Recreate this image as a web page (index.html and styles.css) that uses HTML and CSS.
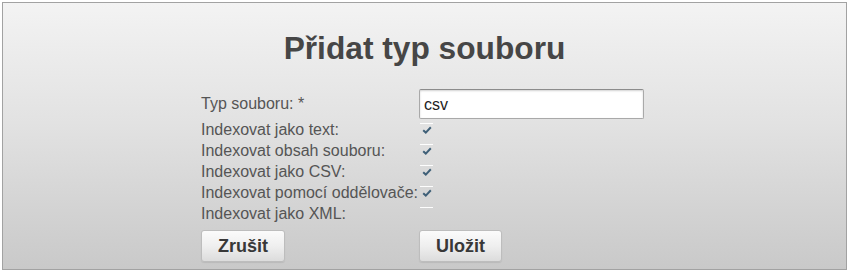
FILE: index.html
```html
<!DOCTYPE html>
<html lang="cs">
<head>
<meta charset="utf-8">
<title>Přidat typ souboru</title>
<link rel="stylesheet" href="styles.css">
</head>
<body>
<div class="panel">
  <h1 class="title">Přidat typ souboru</h1>
  <form class="form">
    <div class="row row-input">
      <label class="label">Typ souboru: *</label>
      <div class="field"><input class="text-input" type="text" value="csv"></div>
    </div>
    <div class="row">
      <label class="label">Indexovat jako text:</label>
      <div class="field"><span class="check"><svg viewBox="0 0 10 8" width="10" height="8"><path d="M1.2 4.2 L3.8 6.6 L8.8 1.2" fill="none" stroke="#3f6078" stroke-width="2"/></svg></span></div>
    </div>
    <div class="row">
      <label class="label">Indexovat obsah souboru:</label>
      <div class="field"><span class="check"><svg viewBox="0 0 10 8" width="10" height="8"><path d="M1.2 4.2 L3.8 6.6 L8.8 1.2" fill="none" stroke="#3f6078" stroke-width="2"/></svg></span></div>
    </div>
    <div class="row">
      <label class="label">Indexovat jako CSV:</label>
      <div class="field"><span class="check"><svg viewBox="0 0 10 8" width="10" height="8"><path d="M1.2 4.2 L3.8 6.6 L8.8 1.2" fill="none" stroke="#3f6078" stroke-width="2"/></svg></span></div>
    </div>
    <div class="row">
      <label class="label">Indexovat pomocí oddělovače:</label>
      <div class="field"><span class="check"><svg viewBox="0 0 10 8" width="10" height="8"><path d="M1.2 4.2 L3.8 6.6 L8.8 1.2" fill="none" stroke="#3f6078" stroke-width="2"/></svg></span></div>
    </div>
    <div class="row">
      <label class="label">Indexovat jako XML:</label>
      <div class="field"><span class="check"></span></div>
    </div>
    <div class="row row-buttons">
      <div class="label"><button type="button" class="btn">Zrušit</button></div>
      <div class="field"><button type="button" class="btn">Uložit</button></div>
    </div>
  </form>
</div>
</body>
</html>
```

FILE: styles.css
```css
html, body {
  margin: 0;
  padding: 0;
  background: #ffffff;
}

body {
  font-family: "Liberation Sans", Arial, sans-serif;
}

.panel {
  margin: 2px 2px 0 2px;
  height: 268px;
  box-sizing: border-box;
  border: 1px solid #a2a2a2;
  background: linear-gradient(to bottom, #f3f3f3 0%, #e2e2e2 45%, #c9c9c9 100%);
  display: flex;
  flex-direction: column;
  align-items: center;
}

.title {
  margin: 27px 0 0 0;
  font-size: 31.7px;
  line-height: 36px;
  font-weight: bold;
  color: #464646;
  text-align: center;
}

.form {
  margin-top: 22px;
  margin-right: 4px;
  display: flex;
  flex-direction: column;
}

.row {
  display: grid;
  grid-template-columns: 218px 225px;
  height: 21px;
  align-items: start;
}

.row-input {
  height: 31px;
  align-items: center;
}

.label {
  font-size: 16px;
  line-height: 21px;
  color: #555555;
  white-space: nowrap;
}

.row-input .label {
  line-height: 18px;
}

.text-input {
  display: block;
  box-sizing: border-box;
  width: 225px;
  height: 30px;
  margin: 0;
  padding: 2px 4px 0 4px;
  border: 1px solid #a9a9a9;
  border-top-color: #8c8c8c;
  border-radius: 2px;
  box-shadow: inset 0 1px 2px rgba(0, 0, 0, 0.18);
  background: #ffffff;
  font-family: "Liberation Sans", Arial, sans-serif;
  font-size: 16px;
  color: #222222;
  outline: none;
}

.check {
  display: flex;
  justify-content: center;
  align-items: flex-start;
  box-sizing: border-box;
  width: 13px;
  height: 13px;
  margin-top: 4px;
  margin-left: 1px;
  padding-top: 2px;
  border-top: 1px solid rgba(255, 255, 255, 0.95);
}

.check svg {
  display: block;
}

.row-buttons {
  height: auto;
  margin-top: 6px;
}

.btn {
  box-sizing: border-box;
  height: 32px;
  margin: 0;
  padding: 0 16px;
  border: 1px solid #bdbdbd;
  border-radius: 3px;
  background: linear-gradient(to bottom, #fbfbfb 0%, #efefef 50%, #dcdcdc 100%);
  box-shadow: 0 1px 1px rgba(0, 0, 0, 0.08);
  font-family: "Liberation Sans", Arial, sans-serif;
  font-size: 18px;
  font-weight: bold;
  color: #383838;
  cursor: pointer;
}
```
